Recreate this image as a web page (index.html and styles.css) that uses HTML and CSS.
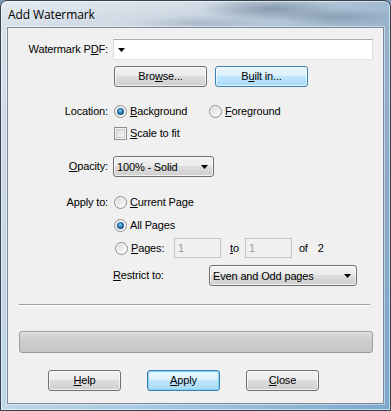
FILE: index.html
```html
<!DOCTYPE html>
<html>
<head>
<meta charset="utf-8">
<link rel="stylesheet" href="styles.css">
</head>
<body>
<div class="window">
  <div class="titlebar"><span class="title">Add Watermark</span></div>
  <div class="client">
    <div class="row r-pdf">
      <span class="lbl">Watermark P<u>D</u>F:</span>
      <div class="combo"><svg class="arrow" width="7" height="4" viewBox="0 0 7 4"><polygon points="0,0 7,0 3.5,4" fill="#000"/></svg></div>
    </div>
    <div class="row r-btns ind-btn">
      <div class="btn w93">Bro<u>w</u>se...</div>
      <div class="btn hot w93">B<u>u</u>ilt in...</div>
    </div>
    <div class="row r-loc">
      <span class="lbl">Location:</span>
      <div class="opt loc1"><span class="radio on"></span><span><u>B</u>ackground</span></div>
      <div class="opt"><span class="radio"></span><span><u>F</u>oreground</span></div>
    </div>
    <div class="row r-scale ind-opt">
      <div class="opt"><span class="check"></span><span><u>S</u>cale to fit</span></div>
    </div>
    <div class="row r-opac">
      <span class="lbl"><u>O</u>pacity:</span>
      <div class="drop opac"><span>100% - Solid</span><svg class="arrow" width="7" height="4" viewBox="0 0 7 4"><polygon points="0,0 7,0 3.5,4" fill="#000"/></svg></div>
    </div>
    <div class="row r-apply">
      <span class="lbl">Apply to:</span>
      <div class="opt"><span class="radio"></span><span><u>C</u>urrent Page</span></div>
    </div>
    <div class="row r-all ind-opt">
      <div class="opt"><span class="radio on"></span><span>All Pages</span></div>
    </div>
    <div class="row r-pages ind-opt">
      <div class="opt pages-opt"><span class="radio"></span><span><u>P</u>ages:</span></div>
      <div class="num">1</div>
      <span class="to"><u>t</u>o</span>
      <div class="num n2">1</div>
      <span class="of">of</span>
      <span class="total">2</span>
    </div>
    <div class="row r-restrict ind-lbl">
      <span class="rlbl"><u>R</u>estrict to:</span>
      <div class="drop restrict"><span>Even and Odd pages</span><svg class="arrow" width="7" height="4" viewBox="0 0 7 4"><polygon points="0,0 7,0 3.5,4" fill="#000"/></svg></div>
    </div>
    <div class="sep"></div>
    <div class="progress"></div>
    <div class="row r-bottom">
      <div class="btn w73"><u>H</u>elp</div>
      <div class="btn hot def w73"><u>A</u>pply</div>
      <div class="btn w73"><u>C</u>lose</div>
    </div>
  </div>
</div>
</body>
</html>
```
FILE: styles.css
```css
* { box-sizing: border-box; }
html, body { margin: 0; padding: 0; }
body {
  width: 391px;
  height: 411px;
  overflow: hidden;
  background: #7d9bb8;
  font-family: "Liberation Sans", Arial, sans-serif;
  font-size: 11px;
  letter-spacing: -0.15px;
  color: #000;
}
u { text-decoration: underline; text-underline-offset: 1px; }

.window {
  width: 391px;
  height: 411px;
  border: 1px solid #34414e;
  border-radius: 7px 7px 0 0;
  padding: 0 6px 6px 6px;
  display: flex;
  flex-direction: column;
  background:
    radial-gradient(ellipse 70px 12px at 270px 8px, rgba(100,120,142,0.6), transparent),
    radial-gradient(ellipse 60px 9px at 335px 16px, rgba(110,130,150,0.5), transparent),
    radial-gradient(ellipse 70px 8px at 200px 22px, rgba(130,150,170,0.4), transparent),
    linear-gradient(to right, rgba(255,255,255,0.3), rgba(255,255,255,0) 45%, rgba(40,100,160,0.3)),
    linear-gradient(to bottom, #d8e0e8 0, #c8d4e0 26px, #b3c5d7 50%, #a2c6e0 100%);
  box-shadow: inset 0 0 0 1px rgba(255,255,255,0.55);
}
.titlebar {
  height: 26px;
  flex: none;
  display: flex;
  align-items: center;
  padding: 1px 0 0 1px;
}
.title {
  font-family: "Open Sans", "Liberation Sans", sans-serif;
  font-size: 12px;
  color: #000;
  letter-spacing: -0.1px;
}
.client {
  flex: 1;
  background: #f0f0f0;
  border: 1px solid #7a8a9c;
  box-shadow: 0 0 0 1px rgba(255,255,255,0.45);
  display: flex;
  flex-direction: column;
}

.row { display: flex; align-items: center; flex: none; }
.lbl { width: 100px; text-align: right; margin-right: 5px; white-space: nowrap; line-height: 13px; }
.ind-btn { padding-left: 106px; }
.ind-opt { padding-left: 106px; }
.ind-lbl { padding-left: 105px; }

.r-pdf { margin-top: 11px; height: 21px; }
.r-btns { margin-top: 6px; height: 21px; gap: 8px; }
.r-loc { margin-top: 18px; height: 13px; }
.r-loc .opt:first-of-type { margin-left: 1px; }
.r-scale { margin-top: 9px; height: 13px; }
.r-opac { margin-top: 16px; height: 21px; }
.r-apply { margin-top: 19px; height: 13px; }
.r-apply .opt { margin-left: 1px; }
.r-all { margin-top: 10px; height: 13px; }
.r-pages { margin-top: 6px; height: 20px; }
.r-restrict { margin-top: 7px; height: 21px; }

.combo {
  width: 260px;
  height: 21px;
  background: #fff;
  border: 1px solid #dbdfe6;
  border-top-color: #abadb3;
  display: flex;
  align-items: center;
  padding-left: 4px;
}
.arrow { display: block; flex: none; }

.btn {
  height: 21px;
  border: 1px solid #707070;
  border-radius: 3px;
  background: linear-gradient(to bottom, #f2f2f2 0%, #ebebeb 49%, #dddddd 50%, #cfcfcf 100%);
  box-shadow: inset 0 0 0 1px rgba(255,255,255,0.7);
  display: flex;
  align-items: center;
  justify-content: center;
  line-height: 13px;
}
.btn.hot {
  border-color: #3c7fb1;
  background: linear-gradient(to bottom, #eaf6fd 0%, #d9f0fc 49%, #bee6fd 50%, #a7d9f5 100%);
}
.btn.def { box-shadow: inset 0 0 0 1px #7fd1f3; }
.w93 { width: 93px; }
.w73 { width: 73px; }

.opt { display: flex; align-items: center; gap: 3px; line-height: 13px; white-space: nowrap; }
.loc1 { width: 95px; }
.radio {
  width: 13px;
  height: 13px;
  flex: none;
  border-radius: 50%;
  border: 1px solid #8e8f8f;
  background: linear-gradient(135deg, #d6d6d6 0%, #f0f0f0 60%, #ffffff 100%);
  box-shadow: inset 0 0 0 1px #f6f6f6;
  display: flex;
  align-items: center;
  justify-content: center;
}
.radio.on::after {
  content: "";
  width: 7px;
  height: 7px;
  border-radius: 50%;
  background: radial-gradient(circle at 45% 40%, #8fd3f3 0%, #3b8fc4 30%, #145282 65%, #0c3a5e 100%);
}
.check {
  width: 13px;
  height: 13px;
  flex: none;
  border: 1px solid #8e8f8f;
  background: linear-gradient(135deg, #cfd2d6 0%, #e9eaeb 50%, #f8f8f8 100%);
  box-shadow: inset 0 0 0 1px #f4f4f4, inset 0 0 0 2px #c9ccd0;
}

.drop {
  height: 21px;
  border: 1px solid #707070;
  border-radius: 3px;
  background: linear-gradient(to bottom, #f2f2f2 0%, #ebebeb 49%, #dddddd 50%, #cfcfcf 100%);
  box-shadow: inset 0 0 0 1px rgba(255,255,255,0.7);
  display: flex;
  align-items: center;
  justify-content: space-between;
  padding: 0 5px 0 3px;
  white-space: nowrap;
}
.opac { width: 101px; }
.restrict { width: 148px; }
.rlbl { width: 96px; line-height: 13px; }

.pages-opt { width: 59px; margin-left: 1px; }
.num {
  width: 47px;
  height: 20px;
  border: 1px solid #c3c6cb;
  background: #f0f0f0;
  color: #9a9a9a;
  padding-left: 3px;
  display: flex;
  align-items: center;
}
.to { margin-left: 9px; }
.n2 { margin-left: 6px; }
.of { margin-left: 7px; }
.total { margin-left: 10px; }

.sep {
  flex: none;
  margin: 18px 0 0 11px;
  width: 351px;
  height: 2px;
  border-top: 1px solid #a0a0a0;
  border-bottom: 1px solid #ffffff;
}
.progress {
  flex: none;
  margin: 25px 0 0 11px;
  width: 354px;
  height: 22px;
  border: 1px solid #9b9b9b;
  border-radius: 3px;
  background: linear-gradient(to bottom, #dcdcdc 0%, #cdcdcd 40%, #c6c6c6 100%);
  box-shadow: inset 0 1px 0 #e8e8e8;
}
.r-bottom { margin-top: 17px; padding-left: 40px; gap: 26px; height: 21px; }
```
